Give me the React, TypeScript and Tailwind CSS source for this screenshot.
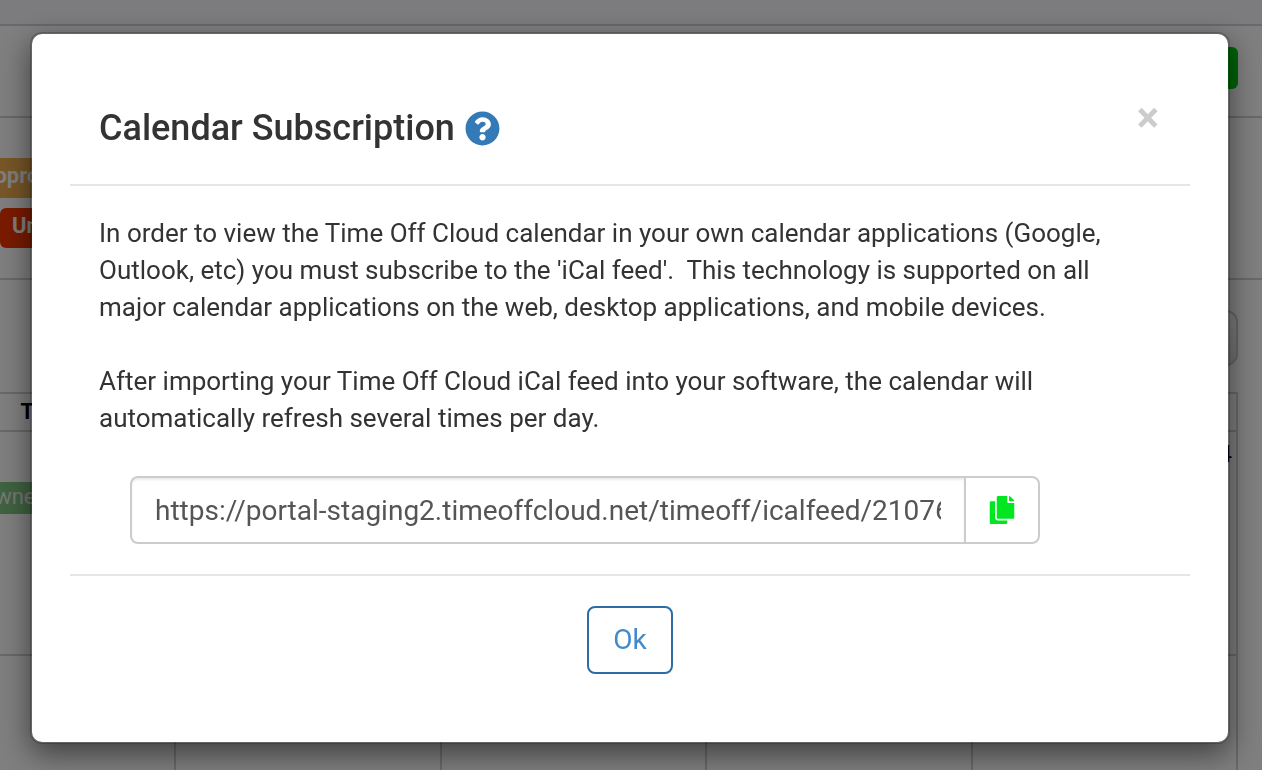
import { useState } from 'react';
import { FaCopy, FaEllipsisV, FaQuestionCircle } from 'react-icons/fa';

const FEED_URL = 'https://portal-staging2.timeoffcloud.net/timeoff/icalfeed/21076';

const columns = [
  { heading: 'Tue', day: '' },
  { heading: '', day: '' },
  { heading: '', day: '' },
  { heading: '', day: '' },
  { heading: '', day: '4' },
];

function CalendarPage() {
  return (
    <div className="h-screen overflow-hidden bg-white text-black">
      <div className="h-[26px] border-b-2 border-[#d2d2d2] bg-[#f8f8fc]" />

      <div className="flex h-[92px] items-center justify-end border-b-2 border-[#d2d2d2] pr-6 pb-1.5">
        <button type="button" aria-label="More actions" className="flex h-[42px] w-12 items-center justify-center rounded-md bg-[#00c914] text-white">
          <FaEllipsisV className="h-5 w-5" />
        </button>
      </div>

      <div className="flex h-[162px] flex-col items-start gap-[10px] border-b-2 border-[#d2d2d2] pt-10 text-[22px] leading-8 font-bold text-white">
        <span className="-ml-7 h-10 bg-[#f0ad4e] px-2 pt-0.5">Approved</span>
        <span className="h-10 rounded-md bg-[#f53600] px-3 pt-0.5">Unapproved</span>
      </div>

      <div className="flex justify-end pt-[30px] pr-6">
        <input aria-label="Search" className="h-14 w-80 rounded-xl border-2 border-[#ccc] bg-linear-to-b from-white to-[#e0e0e0]" />
      </div>

      <div className="pt-[26px] pr-6">
        <table className="w-full table-fixed border-collapse">
          <thead>
            <tr className="h-[38px]">
              {columns.map((column, i) => (
                <th key={i} className="border-2 border-[#d2d2d2] p-0 text-center text-[22px] leading-7 font-bold first:w-[175px] first:border-l-0 first:pr-24">
                  {column.heading}
                </th>
              ))}
            </tr>
          </thead>
          <tbody>
            <tr className="h-56">
              {columns.map((column, i) => (
                <td key={i} className="border-2 border-[#d2d2d2] p-1 text-right align-top text-[24px] leading-9 first:border-l-0 first:p-0">
                  {i === 0 ? (
                    <span className="mt-[50px] -ml-6 flex h-8 items-center bg-[#80c680] px-1 pb-0.5 text-[22px] text-[#eee]">Owner</span>
                  ) : (
                    column.day
                  )}
                </td>
              ))}
            </tr>
            <tr className="h-56">
              {columns.map((_, i) => (
                <td key={i} className="border-2 border-[#d2d2d2] first:border-l-0" />
              ))}
            </tr>
          </tbody>
        </table>
      </div>
    </div>
  );
}

function SubscriptionDialog({ onClose }: { onClose: () => void }) {
  const copyFeed = () => navigator.clipboard?.writeText(FEED_URL);

  return (
    <div className="fixed inset-0 overflow-hidden bg-black/50 pt-8 pr-8 pl-[30px]">
      <div
        role="dialog"
        aria-modal="true"
        aria-labelledby="dialog-title"
        className="rounded-xl border-2 border-black/20 bg-white bg-clip-padding px-[38px] pb-[68px] shadow-[0_10px_30px_rgba(0,0,0,0.5)]"
      >
        <div className="flex items-start justify-between border-b-2 border-[#e5e5e5] pt-[68px] pr-[31px] pb-[35px] pl-[29px]">
          <h4 id="dialog-title" className="flex items-center gap-[10px] pt-[5px] text-[36px] leading-[42px] font-medium">
            Calendar Subscription
            <FaQuestionCircle className="h-[35px] w-[35px] text-[#337ab7]" />
          </h4>
          <button type="button" aria-label="Close" onClick={onClose} className="text-[42px] leading-8 font-bold text-[#ccc]">
            ×
          </button>
        </div>

        <div className="px-[29px] pt-[29px] pb-[30px]">
          <div className="pr-12 text-[26px] leading-[37px]">
            <p>
              In order to view the Time Off Cloud calendar in your own calendar applications (Google,
              Outlook, etc) you must subscribe to the 'iCal feed'.&nbsp; This technology is supported on all
              major calendar applications on the web, desktop applications, and mobile devices.
            </p>
            <p className="mt-[37px]">
              After importing your Time Off Cloud iCal feed into your software, the calendar will
              automatically refresh several times per day.
            </p>
          </div>

          <div className="mt-[39px] mr-[121px] ml-[31px] flex h-[68px]">
            <div className="min-w-0 flex-1 rounded-l-lg border-2 border-r-0 border-[#ccc] px-[23px] shadow-[inset_0_2px_2px_rgba(0,0,0,0.075)]">
              <input
                aria-label="iCal feed URL"
                readOnly
                value={FEED_URL}
                className="h-full w-full bg-transparent text-[28px] text-[#555] outline-none"
              />
            </div>
            <button
              type="button"
              aria-label="Copy"
              onClick={copyFeed}
              className="flex w-[76px] items-center justify-center rounded-r-lg border-2 border-[#ccc] text-[#00e620]"
            >
              <FaCopy className="h-7 w-7" />
            </button>
          </div>
        </div>

        <div className="flex justify-center border-t-2 border-[#e5e5e5] pt-[30px]">
          <button
            type="button"
            onClick={onClose}
            className="h-[68px] w-[86px] rounded-lg border-2 border-[#2e6da4] text-[28px] text-[#428bca]"
          >
            Ok
          </button>
        </div>
      </div>
    </div>
  );
}

export default function App() {
  const [open, setOpen] = useState(true);

  return (
    <div className="font-[Roboto,sans-serif] text-[#333]">
      <CalendarPage />
      {open && <SubscriptionDialog onClose={() => setOpen(false)} />}
    </div>
  );
}
